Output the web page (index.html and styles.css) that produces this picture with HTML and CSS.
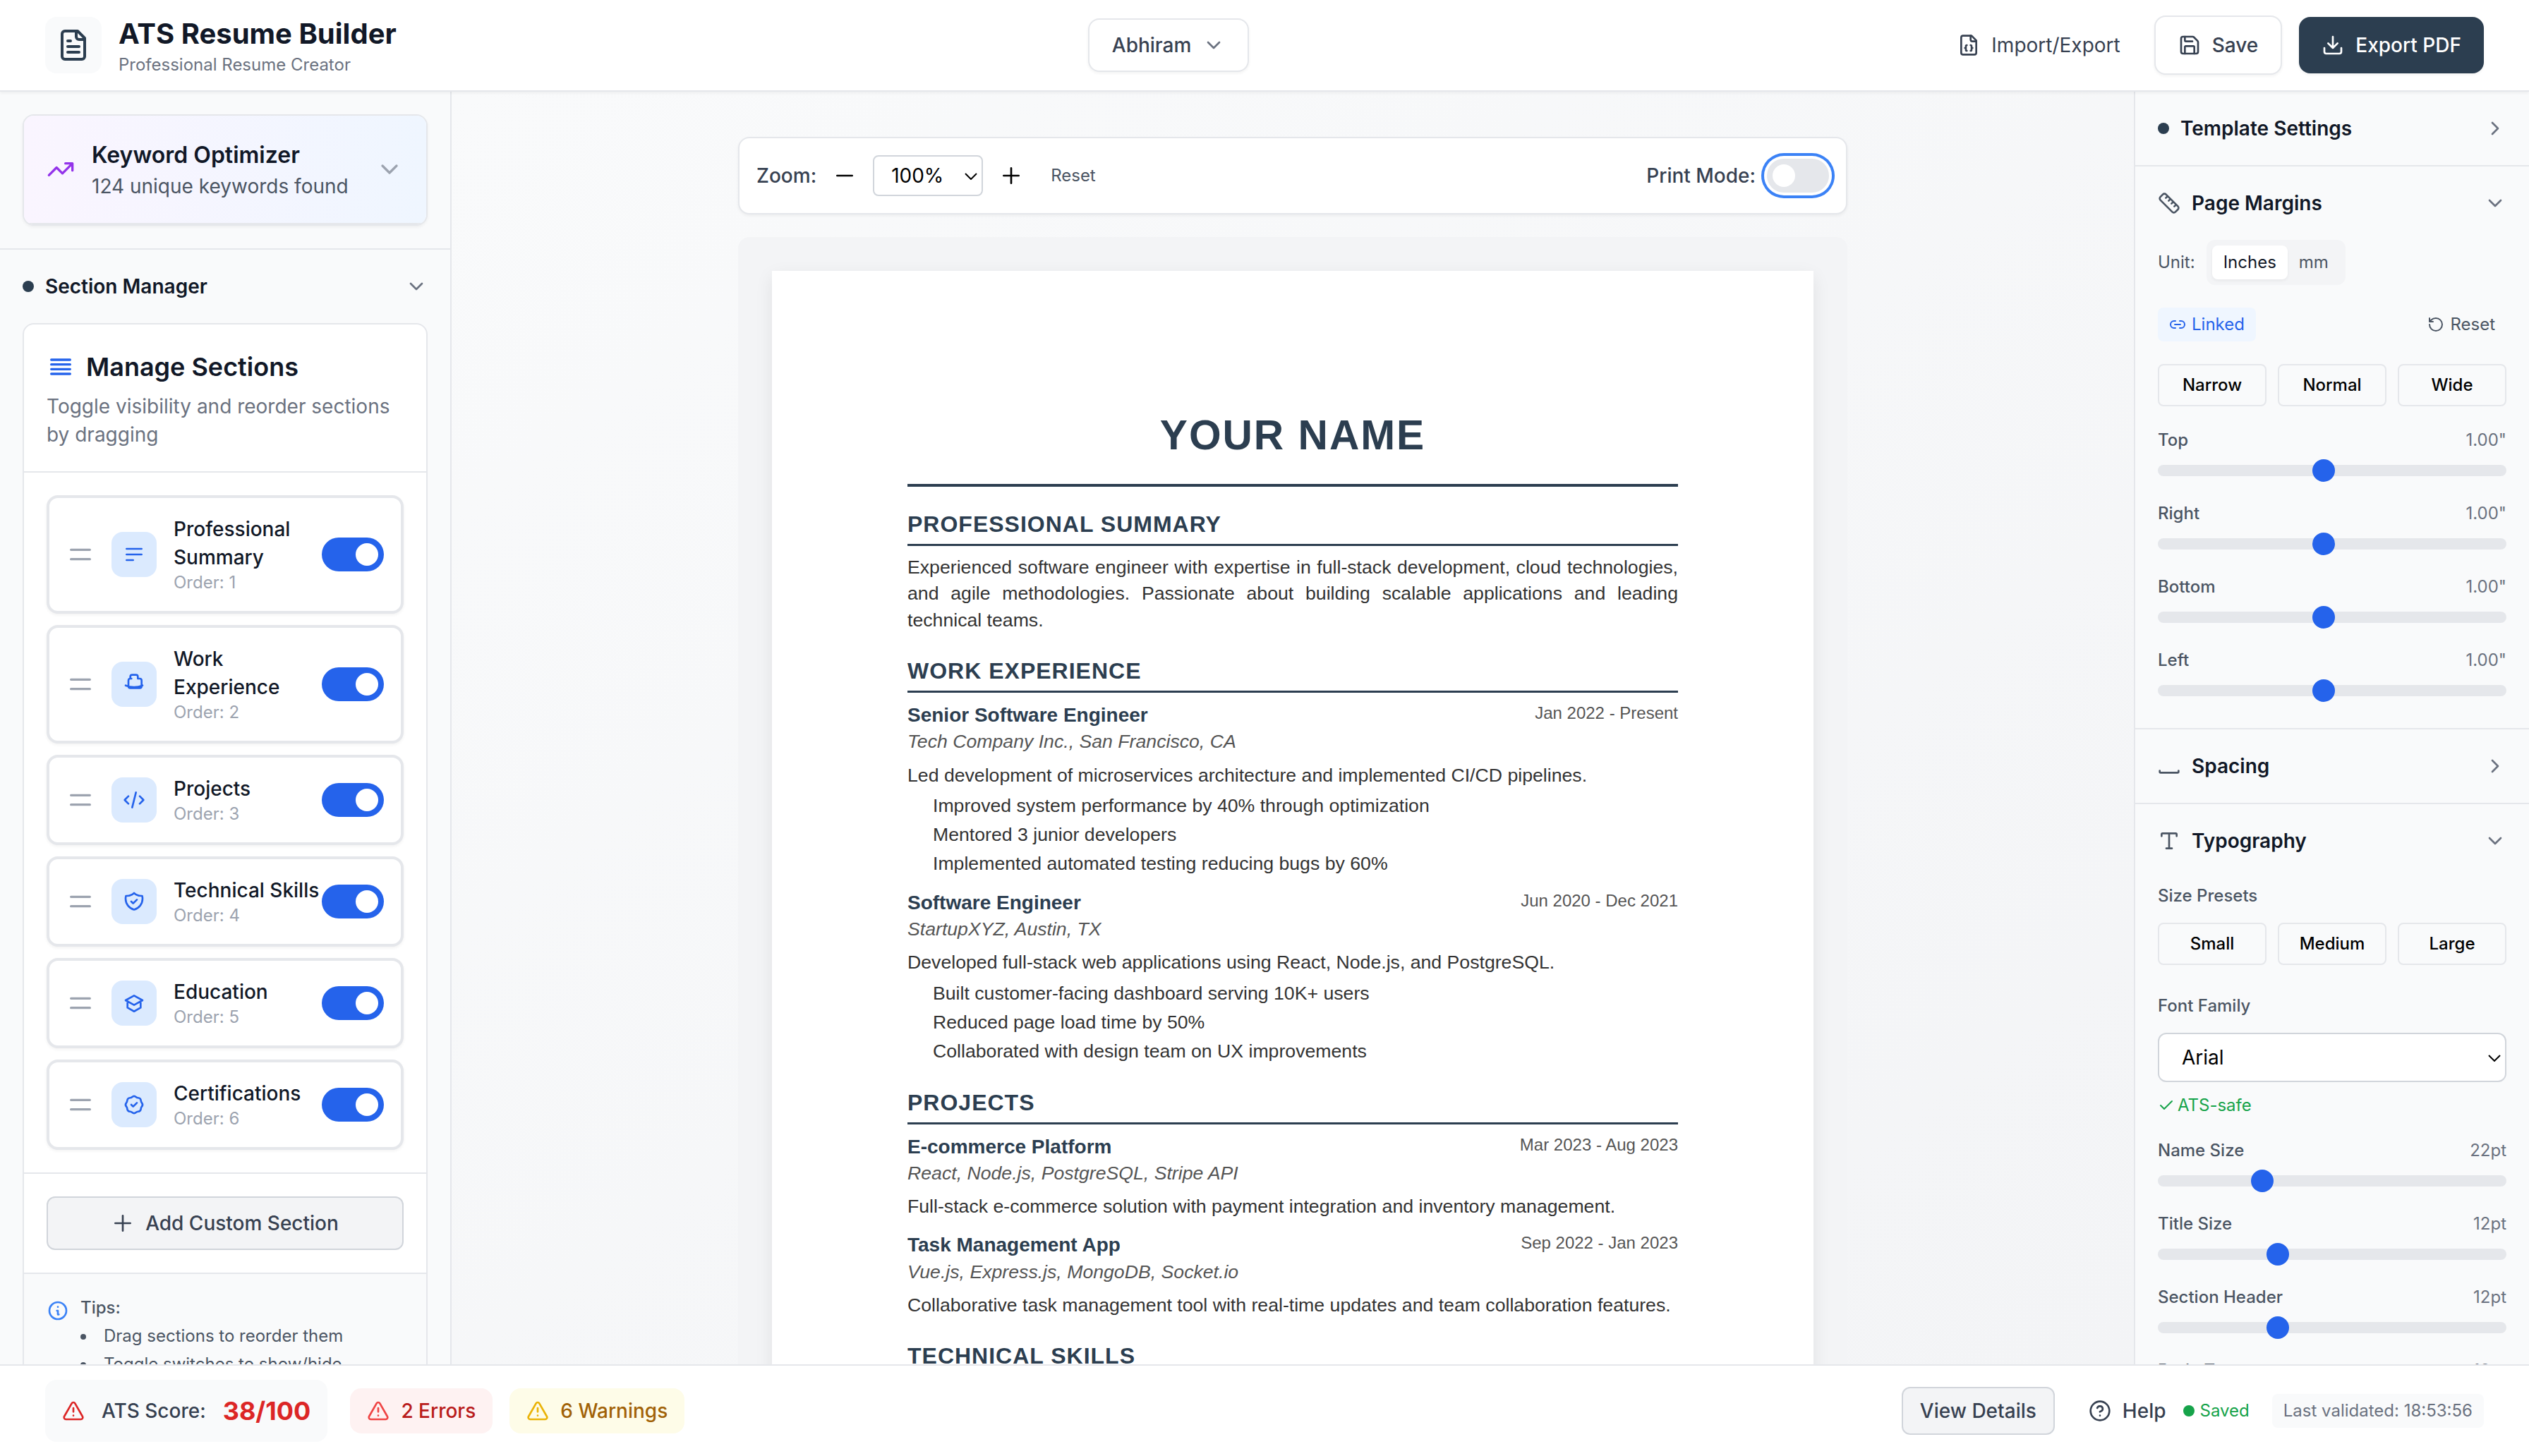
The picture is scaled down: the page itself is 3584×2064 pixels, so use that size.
FILE: index.html
```html
<!DOCTYPE html>
<html lang="en">
<head>
<meta charset="utf-8">
<title>ATS Resume Builder</title>
<link rel="stylesheet" href="styles.css">
</head>
<body>
<svg class="sprite" aria-hidden="true">
  <symbol id="i-file-text" viewBox="0 0 24 24"><path d="M15 2H6a2 2 0 0 0-2 2v16a2 2 0 0 0 2 2h12a2 2 0 0 0 2-2V7Z"/><path d="M14 2v4a2 2 0 0 0 2 2h4M10 9H8M16 13H8M16 17H8"/></symbol>
  <symbol id="i-file-json" viewBox="0 0 24 24"><path d="M15 2H6a2 2 0 0 0-2 2v16a2 2 0 0 0 2 2h12a2 2 0 0 0 2-2V7Z"/><path d="M14 2v4a2 2 0 0 0 2 2h4M10 12a1 1 0 0 0-1 1v1a1 1 0 0 1-1 1 1 1 0 0 1 1 1v1a1 1 0 0 0 1 1M14 18a1 1 0 0 0 1-1v-1a1 1 0 0 1 1-1 1 1 0 0 1-1-1v-1a1 1 0 0 0-1-1"/></symbol>
  <symbol id="i-save" viewBox="0 0 24 24"><path d="M15.2 3a2 2 0 0 1 1.4.6l3.8 3.8a2 2 0 0 1 .6 1.4V19a2 2 0 0 1-2 2H5a2 2 0 0 1-2-2V5a2 2 0 0 1 2-2z"/><path d="M17 21v-7a1 1 0 0 0-1-1H8a1 1 0 0 0-1 1v7M7 3v4a1 1 0 0 0 1 1h7"/></symbol>
  <symbol id="i-download" viewBox="0 0 24 24"><path d="M12 15V3M21 15v4a2 2 0 0 1-2 2H5a2 2 0 0 1-2-2v-4M7 10l5 5 5-5"/></symbol>
  <symbol id="i-down" viewBox="0 0 24 24"><path d="m6 9 6 6 6-6"/></symbol>
  <symbol id="i-right" viewBox="0 0 24 24"><path d="m9 18 6-6-6-6"/></symbol>
  <symbol id="i-trend" viewBox="0 0 24 24"><path d="M16 7h6v6M22 7l-8.500 8.500-5-5L2 17"/></symbol>
  <symbol id="i-list" viewBox="0 0 24 24"><path d="M4 6h16M4 10h16M4 14h16M4 18h16"/></symbol>
  <symbol id="i-handle" viewBox="0 0 24 24"><path d="M4 8h16M4 16h16"/></symbol>
  <symbol id="i-summary" viewBox="0 0 24 24"><path d="M4 6h16M4 12h16M4 18h7"/></symbol>
  <symbol id="i-work" viewBox="0 0 24 24"><path d="M21 13.255A23.931 23.931 0 0112 15c-3.183 0-6.220-.620-9-1.745M9.200 6H8V4a2 2 0 012-2h4a2 2 0 012 2v2h2a2 2 0 012 2v6a2 2 0 01-2 2H8a2 2 0 01-2-2V8a2 2 0 012-2"/></symbol>
  <symbol id="i-code" viewBox="0 0 24 24"><path d="M10 20l4-16m4 4l4 4-4 4M6 16l-4-4 4-4"/></symbol>
  <symbol id="i-shield" viewBox="0 0 24 24"><path d="M9 12l2 2 4-4m5.618-4.016A11.955 11.955 0 0112 2.944a11.955 11.955 0 01-8.618 3.040A12.020 12.020 0 003 9c0 5.591 3.824 10.290 9 11.622 5.176-1.332 9-6.030 9-11.622 0-1.042-.133-2.052-.382-3.016z"/></symbol>
  <symbol id="i-cap" viewBox="0 0 24 24"><path d="M12 14l9-5-9-5-9 5 9 5zM5 10v6.800l7 4 7-4V10"/></symbol>
  <symbol id="i-badge" viewBox="0 0 24 24"><path d="M9 12l2 2 4-4M7.835 4.697a3.420 3.420 0 001.946-.806 3.420 3.420 0 014.438 0 3.420 3.420 0 001.946.806 3.420 3.420 0 013.138 3.138 3.420 3.420 0 00.806 1.946 3.420 3.420 0 010 4.438 3.420 3.420 0 00-.806 1.946 3.420 3.420 0 01-3.138 3.138 3.420 3.420 0 00-1.946.806 3.420 3.420 0 01-4.438 0 3.420 3.420 0 00-1.946-.806 3.420 3.420 0 01-3.138-3.138 3.420 3.420 0 00-.806-1.946 3.420 3.420 0 010-4.438 3.420 3.420 0 00.806-1.946 3.420 3.420 0 013.138-3.138z"/></symbol>
  <symbol id="i-plus" viewBox="0 0 24 24"><path d="M12 4v16m8-8H4"/></symbol>
  <symbol id="i-minus" viewBox="0 0 24 24"><path d="M20 12H4"/></symbol>
  <symbol id="i-info" viewBox="0 0 24 24"><path d="M13 16h-1v-4h-1m1-4h.01M21 12a9 9 0 11-18 0 9 9 0 0118 0z"/></symbol>
  <symbol id="i-ruler" viewBox="0 0 24 24"><path d="M21.300 15.300a2.400 2.400 0 0 1 0 3.400l-2.600 2.600a2.400 2.400 0 0 1-3.400 0L2.700 8.700a2.410 2.410 0 0 1 0-3.400l2.600-2.600a2.410 2.410 0 0 1 3.400 0ZM14.500 12.500l2-2M11.500 9.500l2-2M8.500 6.500l2-2M17.500 15.500l2-2"/></symbol>
  <symbol id="i-space" viewBox="0 0 24 24"><path d="M22 17v1c0 .5-.5 1-1 1H3c-.5 0-1-.5-1-1v-1"/></symbol>
  <symbol id="i-type" viewBox="0 0 24 24"><path d="M12 4v16M4 7V5a1 1 0 0 1 1-1h14a1 1 0 0 1 1 1v2M9 20h6"/></symbol>
  <symbol id="i-link" viewBox="0 0 24 24"><path d="M9 17H7A5 5 0 0 1 7 7h2M15 7h2a5 5 0 1 1 0 10h-2M8 12h8"/></symbol>
  <symbol id="i-reset" viewBox="0 0 24 24"><path d="M3 12a9 9 0 1 0 9-9 9.750 9.750 0 0 0-6.740 2.740L3 8M3 3v5h5"/></symbol>
  <symbol id="i-check" viewBox="0 0 24 24"><path d="M20 6 9 17l-5-5"/></symbol>
  <symbol id="i-alert" viewBox="0 0 24 24"><path d="m21.730 18-8-14a2 2 0 0 0-3.480 0l-8 14A2 2 0 0 0 4 21h16a2 2 0 0 0 1.730-3M12 9v4M12 17h.01"/></symbol>
  <symbol id="i-help" viewBox="0 0 24 24"><circle cx="12" cy="12" r="10"/><path d="M9.090 9a3 3 0 0 1 5.830 1c0 2-3 3-3 3M12 17h.01"/></symbol>
</svg>

<header class="topbar">
  <div class="brand">
    <div class="brand-icon"><svg class="icon icon-xl"><use href="#i-file-text"/></svg></div>
    <div>
      <h1 class="brand-title">ATS Resume Builder</h1>
      <p class="brand-sub">Professional Resume Creator</p>
    </div>
  </div>
  <button class="btn btn-profile" type="button">Abhiram <svg class="icon muted"><use href="#i-down"/></svg></button>
  <div class="actions">
    <button class="btn btn-ghost" type="button"><svg class="icon"><use href="#i-file-json"/></svg>Import/Export</button>
    <button class="btn btn-outline" type="button"><svg class="icon"><use href="#i-save"/></svg>Save</button>
    <button class="btn btn-primary" type="button"><svg class="icon"><use href="#i-download"/></svg>Export PDF</button>
  </div>
</header>

<div class="workspace">
  <aside class="sidebar left">
    <div class="keyword-wrap">
      <div class="keyword-card">
        <button class="keyword-btn" type="button">
          <svg class="icon icon-lg purple"><use href="#i-trend"/></svg>
          <span class="keyword-text"><span class="keyword-title">Keyword Optimizer</span><span class="keyword-sub">124 unique keywords found</span></span>
          <svg class="icon icon-lg faint"><use href="#i-down"/></svg>
        </button>
      </div>
    </div>
    <button class="panel-head" type="button"><span class="dot"></span><span class="panel-title">Section Manager</span><svg class="icon muted"><use href="#i-down"/></svg></button>
    <section class="manager">
      <div class="manager-head">
        <h2 class="manager-title"><svg class="icon icon-lg blue"><use href="#i-list"/></svg>Manage Sections</h2>
        <p class="manager-sub">Toggle visibility and reorder sections by dragging</p>
      </div>
      <ul class="section-list">
        <li class="section-item">
          <svg class="icon icon-lg faint"><use href="#i-handle"/></svg>
          <span class="tile"><svg class="icon"><use href="#i-summary"/></svg></span>
          <label class="item-text" for="t1"><span class="item-name">Professional Summary</span><span class="item-order">Order: 1</span></label>
          <input class="toggle" id="t1" type="checkbox" checked>
        </li>
        <li class="section-item">
          <svg class="icon icon-lg faint"><use href="#i-handle"/></svg>
          <span class="tile"><svg class="icon"><use href="#i-work"/></svg></span>
          <label class="item-text" for="t2"><span class="item-name">Work Experience</span><span class="item-order">Order: 2</span></label>
          <input class="toggle" id="t2" type="checkbox" checked>
        </li>
        <li class="section-item">
          <svg class="icon icon-lg faint"><use href="#i-handle"/></svg>
          <span class="tile"><svg class="icon"><use href="#i-code"/></svg></span>
          <label class="item-text" for="t3"><span class="item-name">Projects</span><span class="item-order">Order: 3</span></label>
          <input class="toggle" id="t3" type="checkbox" checked>
        </li>
        <li class="section-item">
          <svg class="icon icon-lg faint"><use href="#i-handle"/></svg>
          <span class="tile"><svg class="icon"><use href="#i-shield"/></svg></span>
          <label class="item-text" for="t4"><span class="item-name">Technical Skills</span><span class="item-order">Order: 4</span></label>
          <input class="toggle" id="t4" type="checkbox" checked>
        </li>
        <li class="section-item">
          <svg class="icon icon-lg faint"><use href="#i-handle"/></svg>
          <span class="tile"><svg class="icon"><use href="#i-cap"/></svg></span>
          <label class="item-text" for="t5"><span class="item-name">Education</span><span class="item-order">Order: 5</span></label>
          <input class="toggle" id="t5" type="checkbox" checked>
        </li>
        <li class="section-item">
          <svg class="icon icon-lg faint"><use href="#i-handle"/></svg>
          <span class="tile"><svg class="icon"><use href="#i-badge"/></svg></span>
          <label class="item-text" for="t6"><span class="item-name">Certifications</span><span class="item-order">Order: 6</span></label>
          <input class="toggle" id="t6" type="checkbox" checked>
        </li>
      </ul>
      <div class="manager-add"><button class="btn btn-add" type="button"><svg class="icon"><use href="#i-plus"/></svg>Add Custom Section</button></div>
      <div class="tips">
        <svg class="icon tips-icon"><use href="#i-info"/></svg>
        <div>
          <p class="tips-title">Tips:</p>
          <ul class="tips-list">
            <li>Drag sections to reorder them</li>
            <li>Toggle switches to show/hide</li>
          </ul>
        </div>
      </div>
    </section>
  </aside>

  <main class="canvas">
    <div class="preview">
      <div class="toolbar">
        <div class="zoom">
          <label class="strong" for="zoom">Zoom:</label>
          <button class="icon-btn" type="button" aria-label="Zoom out"><svg class="icon"><use href="#i-minus"/></svg></button>
          <span class="select-wrap zoom-select"><select id="zoom"><option>100%</option></select><svg class="caret" viewBox="0 0 18 10"><path d="M1 1l8 8 8-8"/></svg></span>
          <button class="icon-btn" type="button" aria-label="Zoom in"><svg class="icon"><use href="#i-plus"/></svg></button>
          <button class="text-btn" type="button">Reset</button>
        </div>
        <div class="print">
          <label class="strong" for="print">Print Mode:</label>
          <input class="toggle toggle-focus" id="print" type="checkbox">
        </div>
      </div>
      <div class="stage">
        <article class="paper">
          <h2 class="name">YOUR NAME</h2>
          <section class="block">
            <h3>PROFESSIONAL SUMMARY</h3>
            <p class="summary">Experienced software engineer with expertise in full-stack development, cloud technologies, and agile methodologies. Passionate about building scalable applications and leading technical teams.</p>
          </section>
          <section class="block">
            <h3>WORK EXPERIENCE</h3>
            <div class="entry">
              <div class="entry-head"><h4>Senior Software Engineer</h4><span class="date">Jan 2022 - Present</span></div>
              <p class="org">Tech Company Inc., San Francisco, CA</p>
              <p class="desc">Led development of microservices architecture and implemented CI/CD pipelines.</p>
              <ul><li>Improved system performance by 40% through optimization</li><li>Mentored 3 junior developers</li><li>Implemented automated testing reducing bugs by 60%</li></ul>
            </div>
            <div class="entry">
              <div class="entry-head"><h4>Software Engineer</h4><span class="date">Jun 2020 - Dec 2021</span></div>
              <p class="org">StartupXYZ, Austin, TX</p>
              <p class="desc">Developed full-stack web applications using React, Node.js, and PostgreSQL.</p>
              <ul><li>Built customer-facing dashboard serving 10K+ users</li><li>Reduced page load time by 50%</li><li>Collaborated with design team on UX improvements</li></ul>
            </div>
          </section>
          <section class="block">
            <h3>PROJECTS</h3>
            <div class="entry">
              <div class="entry-head"><h4>E-commerce Platform</h4><span class="date">Mar 2023 - Aug 2023</span></div>
              <p class="org">React, Node.js, PostgreSQL, Stripe API</p>
              <p class="desc">Full-stack e-commerce solution with payment integration and inventory management.</p>
            </div>
            <div class="entry">
              <div class="entry-head"><h4>Task Management App</h4><span class="date">Sep 2022 - Jan 2023</span></div>
              <p class="org">Vue.js, Express.js, MongoDB, Socket.io</p>
              <p class="desc">Collaborative task management tool with real-time updates and team collaboration features.</p>
            </div>
          </section>
          <section class="block">
            <h3>TECHNICAL SKILLS</h3>
          </section>
        </article>
      </div>
    </div>
  </main>

  <aside class="sidebar right">
    <section class="panel">
      <button class="panel-head" type="button"><span class="dot"></span><span class="panel-title">Template Settings</span><svg class="icon muted"><use href="#i-right"/></svg></button>
    </section>
    <section class="panel">
      <button class="panel-head" type="button"><svg class="icon slate"><use href="#i-ruler"/></svg><span class="panel-title">Page Margins</span><svg class="icon muted"><use href="#i-down"/></svg></button>
      <div class="panel-body">
        <div class="unit"><span>Unit:</span><div class="segment"><button class="active" type="button">Inches</button><button type="button">mm</button></div></div>
        <div class="link-row">
          <button class="chip chip-blue" type="button"><svg class="icon icon-sm"><use href="#i-link"/></svg>Linked</button>
          <button class="chip" type="button"><svg class="icon icon-sm"><use href="#i-reset"/></svg>Reset</button>
        </div>
        <div class="presets"><button type="button">Narrow</button><button type="button">Normal</button><button type="button">Wide</button></div>
        <div class="sliders">
          <div class="slider"><label for="m1">Top</label><output for="m1">1.00"</output><input id="m1" type="range" min="0.1" max="2" step="0.1" value="1"></div>
          <div class="slider"><label for="m2">Right</label><output for="m2">1.00"</output><input id="m2" type="range" min="0.1" max="2" step="0.1" value="1"></div>
          <div class="slider"><label for="m3">Bottom</label><output for="m3">1.00"</output><input id="m3" type="range" min="0.1" max="2" step="0.1" value="1"></div>
          <div class="slider"><label for="m4">Left</label><output for="m4">1.00"</output><input id="m4" type="range" min="0.1" max="2" step="0.1" value="1"></div>
        </div>
      </div>
    </section>
    <section class="panel">
      <button class="panel-head" type="button"><svg class="icon slate"><use href="#i-space"/></svg><span class="panel-title">Spacing</span><svg class="icon muted"><use href="#i-right"/></svg></button>
    </section>
    <section class="panel">
      <button class="panel-head" type="button"><svg class="icon slate"><use href="#i-type"/></svg><span class="panel-title">Typography</span><svg class="icon muted"><use href="#i-down"/></svg></button>
      <div class="panel-body">
        <div><p class="field-label">Size Presets</p>
        <div class="presets"><button type="button">Small</button><button type="button">Medium</button><button type="button">Large</button></div></div>
        <div><label class="field-label" for="font">Font Family</label>
        <span class="select-wrap font-select"><select id="font"><option>Arial</option></select><svg class="caret" viewBox="0 0 18 10"><path d="M1 1l8 8 8-8"/></svg></span>
        <p class="safe"><svg class="icon icon-sm"><use href="#i-check"/></svg>ATS-safe</p></div>
        <div class="sliders">
          <div class="slider"><label for="s1">Name Size</label><output for="s1">22pt</output><input id="s1" type="range" min="18" max="32" value="22"></div>
          <div class="slider"><label for="s2">Title Size</label><output for="s2">12pt</output><input id="s2" type="range" min="10" max="16" value="12"></div>
          <div class="slider"><label for="s3">Section Header</label><output for="s3">12pt</output><input id="s3" type="range" min="10" max="16" value="12"></div>
          <div class="slider"><label for="s4">Body Text</label><output for="s4">10pt</output><input id="s4" type="range" min="8" max="14" value="10"></div>
        </div>
      </div>
    </section>
  </aside>
</div>

<footer class="statusbar">
  <div class="score"><svg class="icon red"><use href="#i-alert"/></svg><span class="strong">ATS Score:</span><span class="score-value">38/100</span></div>
  <div class="badge badge-red"><svg class="icon"><use href="#i-alert"/></svg>2 Errors</div>
  <div class="badge badge-yellow"><svg class="icon"><use href="#i-alert"/></svg>6 Warnings</div>
  <div class="status-right">
    <button class="btn btn-details" type="button">View Details</button>
    <button class="btn btn-help" type="button"><svg class="icon"><use href="#i-help"/></svg>Help</button>
    <span class="saved"><span class="saved-dot"></span>Saved</span>
    <span class="validated">Last validated: 18:53:56</span>
  </div>
</footer>
</body>
</html>
```
FILE: styles.css
```css
* { box-sizing: border-box; margin: 0; padding: 0; }

body {
  display: flex;
  flex-direction: column;
  height: 100vh;
  overflow: hidden;
  font-family: Inter, "Liberation Sans", sans-serif;
  font-size: 28px;
  line-height: 40px;
  color: #111827;
  background: #fff;
}

button, select, input { font: inherit; color: inherit; }
button { border: 0; background: none; cursor: pointer; }
ul { list-style: none; }

.sprite { position: absolute; width: 0; height: 0; }
.icon {
  flex: none;
  width: 32px;
  height: 32px;
  fill: none;
  stroke: currentColor;
  stroke-width: 2;
  stroke-linecap: round;
  stroke-linejoin: round;
}
.icon-sm { width: 24px; height: 24px; }
.icon-lg { width: 40px; height: 40px; }
.icon-xl { width: 48px; height: 48px; }
.muted { color: #6b7280; }
.faint { color: #9ca3af; }
.slate { color: #4b5563; }
.purple { color: #9333ea; }
.blue { color: #2563eb; }
.red { color: #dc2626; }
.strong { font-weight: 500; color: #374151; }

/* Top bar */
.topbar {
  position: relative;
  z-index: 2;
  flex: none;
  display: flex;
  align-items: center;
  justify-content: space-between;
  padding: 20px 64px;
  background: #fff;
  border-bottom: 2px solid #e5e7eb;
  box-shadow: 0 2px 4px rgba(0, 0, 0, 0.05);
}
.brand { display: flex; align-items: center; gap: 24px; }
.brand-icon { padding: 16px; border-radius: 16px; background: #f9fafb; color: #2c3e50; }
.brand-icon .icon { display: block; }
.brand-title { font-size: 40px; line-height: 56px; font-weight: 700; }
.brand-sub { font-size: 24px; line-height: 32px; color: #6b7280; }
.actions { display: flex; align-items: center; gap: 24px; }

.btn {
  display: inline-flex;
  align-items: center;
  justify-content: center;
  gap: 16px;
  font-weight: 500;
  color: #374151;
  border-radius: 16px;
}
.btn-profile { padding: 16px 32px; border: 2px solid #e5e7eb; background: #fff; box-shadow: 0 2px 4px rgba(0, 0, 0, 0.05); }
.btn-ghost { padding: 20px 24px; font-weight: 400; }
.btn-outline { padding: 20px 32px; border: 2px solid #e5e7eb; background: #fff; box-shadow: 0 2px 4px rgba(0, 0, 0, 0.05); }
.btn-primary { padding: 20px 32px; background: #2c3e50; color: #fff; box-shadow: 0 2px 4px rgba(0, 0, 0, 0.05); }

/* Three-column workspace */
.workspace { flex: 1; min-height: 0; display: flex; overflow: hidden; }
.sidebar { flex: none; overflow: hidden; background: #f9fafb; }
.left { width: 640px; border-right: 2px solid #e5e7eb; }
.right { width: 560px; border-left: 2px solid #e5e7eb; }

.keyword-wrap { padding: 32px; border-bottom: 2px solid #e5e7eb; }
.keyword-card { border: 2px solid #e5e7eb; border-radius: 16px; background: #fff; overflow: hidden; box-shadow: 0 2px 4px rgba(0, 0, 0, 0.05); }
.keyword-btn {
  display: flex;
  align-items: center;
  gap: 24px;
  width: 100%;
  padding: 32px;
  text-align: left;
  background: linear-gradient(to right, #faf5ff, #eff6ff);
  border-bottom: 2px solid #e5e7eb;
}
.keyword-text { flex: 1; display: flex; flex-direction: column; }
.keyword-title { font-size: 32px; line-height: 48px; font-weight: 600; }
.keyword-sub { color: #4b5563; }

.panel-head { display: flex; align-items: center; gap: 16px; width: 100%; padding: 32px; text-align: left; }
.panel-title { flex: 1; font-weight: 600; color: #111827; }
.dot { width: 16px; height: 16px; border-radius: 50%; background: #2c3e50; }

.manager { margin: 0 32px; border: 2px solid #e5e7eb; border-radius: 16px; background: #fff; overflow: hidden; }
.manager-head { padding: 32px; border-bottom: 2px solid #e5e7eb; }
.manager-title { display: flex; align-items: center; gap: 16px; margin-bottom: 8px; font-size: 36px; line-height: 56px; font-weight: 600; }
.manager-sub { color: #6b7280; }
.section-list { display: flex; flex-direction: column; gap: 16px; padding: 32px; }
.section-item { display: flex; align-items: center; padding: 24px; border: 4px solid #e5e7eb; border-radius: 16px; background: #fff; box-shadow: 0 2px 4px rgba(0, 0, 0, 0.05); }
.tile { flex: none; display: grid; place-items: center; width: 64px; height: 64px; margin: 0 24px; border-radius: 16px; background: #dbeafe; color: #2563eb; }
.item-text { flex: 1; display: flex; flex-direction: column; }
.item-name { font-weight: 500; }
.item-order { font-size: 24px; line-height: 32px; color: #9ca3af; }

.toggle { flex: none; appearance: none; width: 88px; height: 48px; padding: 8px; border-radius: 24px; background: #e5e7eb; cursor: pointer; }
.toggle::before { content: ""; display: block; width: 32px; height: 32px; border-radius: 50%; background: #fff; }
.toggle:checked { background: #2563eb; }
.toggle:checked::before { margin-left: auto; }
.toggle-focus { box-shadow: 0 0 0 4px #fff, 0 0 0 8px #3b82f6; }

.manager-add { padding: 32px; border-top: 2px solid #e5e7eb; border-bottom: 2px solid #e5e7eb; }
.btn-add { width: 100%; padding: 16px 32px; border: 2px solid #d1d5db; border-radius: 12px; background: #f3f4f6; }
.tips { display: flex; gap: 16px; padding: 32px; background: #f9fafb; font-size: 24px; line-height: 32px; color: #4b5563; }
.tips-icon { margin-top: 4px; color: #3b82f6; }
.tips-title { font-weight: 500; }
.tips-list { list-style: disc inside; }
.tips-list li { margin-top: 8px; white-space: nowrap; }

/* Preview canvas */
.canvas { flex: 1; min-width: 0; overflow: hidden; padding: 64px; background: linear-gradient(to bottom right, #f9fafb, #f3f4f6); }
.preview { max-width: 1572px; margin: 0 auto; }
.toolbar { display: flex; align-items: center; justify-content: space-between; padding: 24px; border: 2px solid #e5e7eb; border-radius: 16px; background: #fff; box-shadow: 0 2px 4px rgba(0, 0, 0, 0.05); }
.zoom, .print { display: flex; align-items: center; gap: 16px; }
.icon-btn { display: grid; padding: 8px; color: #000; }
.text-btn { padding: 8px 16px; font-size: 24px; line-height: 32px; color: #4b5563; }
.select-wrap { position: relative; display: block; color: #000; }
.select-wrap select { display: block; appearance: none; width: 100%; background: #fff; border: 2px solid #d1d5db; outline: 0; }
.caret { position: absolute; right: 8px; top: 50%; width: 18px; height: 10px; margin-top: -4px; fill: none; stroke: currentColor; stroke-width: 2; pointer-events: none; }
.zoom-select { width: 156px; }
.zoom-select select { padding: 7px 24px; border-radius: 8px; }
.font-select select { padding: 13px 32px; border-radius: 12px; }

.stage { margin-top: 32px; padding: 48px; border-radius: 16px; background: #f3f4f6; }
.paper {
  padding: 192px;
  background: #fff;
  color: #333;
  box-shadow: 0 8px 24px rgba(0, 0, 0, 0.08);
  font-family: "Liberation Sans", Arial, sans-serif;
  font-size: 20pt;
  line-height: 1.4;
}
.name { padding-bottom: 28px; border-bottom: 4px solid #2c3e50; text-align: center; font-size: 44pt; line-height: 82px; letter-spacing: 2px; color: #2c3e50; }
.block { margin-top: 31px; }
.block h3 { padding-bottom: 5px; margin-bottom: 12px; border-bottom: 3px solid #2c3e50; font-size: 24pt; line-height: 45px; letter-spacing: 1px; color: #2c3e50; }
.summary { text-align: justify; }
.entry + .entry { margin-top: 16px; }
.entry-head { display: flex; justify-content: space-between; align-items: flex-start; }
.entry-head h4 { font-size: 21pt; color: #2c3e50; }
.date { font-size: 18pt; color: #555; }
.org { font-style: italic; color: #555; }
.desc { margin-top: 10px; }
.entry ul { display: flex; flex-direction: column; gap: 4px; margin-top: 6px; padding-left: 36px; }

/* Settings panels */
.panel { border-bottom: 2px solid #e5e7eb; }
.panel-body { display: flex; flex-direction: column; gap: 32px; padding: 0 32px 37px; font-size: 24px; line-height: 32px; }
.unit { display: flex; align-items: center; gap: 16px; color: #4b5563; }
.segment { display: flex; padding: 8px; border-radius: 12px; background: #f3f4f6; }
.segment button { padding: 8px 16px; border-radius: 8px; color: #4b5563; }
.segment .active { background: #fff; color: #111827; box-shadow: 0 2px 4px rgba(0, 0, 0, 0.05); }
.link-row { display: flex; justify-content: space-between; }
.chip { display: flex; align-items: center; gap: 8px; padding: 8px 16px; border-radius: 8px; color: #4b5563; }
.chip-blue { background: #eff6ff; color: #2563eb; }
.presets { display: grid; grid-template-columns: repeat(3, 1fr); gap: 16px; }
.presets button { padding: 12px 0; border: 2px solid #e5e7eb; border-radius: 8px; font-weight: 500; color: #000; }
.sliders { display: flex; flex-direction: column; gap: 29px; }
.slider { display: grid; grid-template-columns: 1fr auto; row-gap: 11px; }
.slider label { font-weight: 500; color: #4b5563; }
.slider output { color: #6b7280; }
.slider input { grid-column: 1 / -1; appearance: none; width: 100%; height: 32px; background: none; }
.slider input::-webkit-slider-runnable-track { height: 16px; border-radius: 8px; background: #e5e7eb; }
.slider input::-webkit-slider-thumb { appearance: none; width: 32px; height: 32px; margin-top: -8px; border-radius: 50%; background: #2563eb; }
.field-label { display: block; margin-bottom: 12px; line-height: 52px; font-weight: 500; color: #4b5563; }
.font-select { font-size: 28px; line-height: 40px; }
.safe { display: flex; align-items: center; gap: 4px; margin-top: 17px; color: #16a34a; }

/* Status bar */
.statusbar { position: relative; z-index: 2; flex: none; display: flex; align-items: center; padding: 20px 64px; background: #fff; border-top: 2px solid #e5e7eb; }
.score { display: flex; align-items: center; gap: 24px; margin-right: 32px; padding: 16px 24px; border-radius: 16px; background: #f9fafb; }
.score-value { font-size: 36px; line-height: 56px; font-weight: 700; color: #dc2626; }
.badge { display: flex; align-items: center; gap: 16px; margin-right: 24px; padding: 12px 24px; border-radius: 16px; font-weight: 500; }
.badge-red { background: #fef2f2; color: #b91c1c; }
.badge-red .icon { color: #ef4444; }
.badge-yellow { background: #fefce8; color: #a16207; }
.badge-yellow .icon { color: #eab308; }
.status-right { display: flex; align-items: center; margin-left: auto; font-size: 24px; line-height: 32px; }
.btn-details, .btn-help { font-size: 28px; line-height: 40px; }
.btn-details { padding: 12px 24px; border: 2px solid #d1d5db; border-radius: 12px; background: #f3f4f6; }
.btn-help { margin-left: 24px; padding: 12px 24px; }
.saved { display: flex; align-items: center; gap: 8px; color: #16a34a; }
.saved-dot { width: 16px; height: 16px; border-radius: 50%; background: #16a34a; }
.validated { margin-left: 32px; padding: 8px 16px; border-radius: 8px; background: #f9fafb; color: #6b7280; }
```
